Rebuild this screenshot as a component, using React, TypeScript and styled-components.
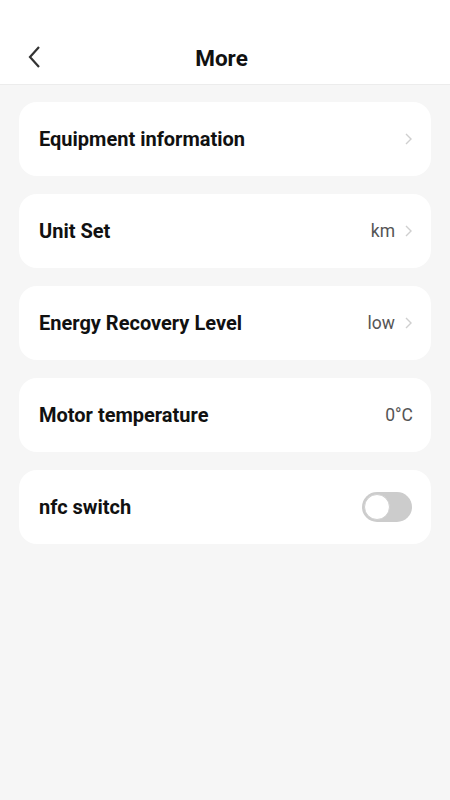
import styled, { createGlobalStyle } from "styled-components";

const GlobalStyle = createGlobalStyle`
  html, body {
    margin: 0;
    padding: 0;
    background: #f6f6f6;
    font-family: Roboto, "Noto Sans", sans-serif;
  }
`;

const Page = styled.div`
  width: 450px;
  min-height: 800px;
  background: #f6f6f6;
`;

const Header = styled.header`
  height: 85px;
  background: #ffffff;
  border-bottom: 1px solid #ececec;
  display: flex;
  align-items: center;
  justify-content: center;
  position: relative;
  box-sizing: border-box;
  padding: 32px 7px 0 0;
`;

const BackButton = styled.button`
  position: absolute;
  left: 22px;
  top: 44px;
  width: 26px;
  height: 26px;
  padding: 0;
  border: none;
  background: none;
  display: flex;
  align-items: center;
  justify-content: center;
`;

const Title = styled.h1`
  margin: 0;
  font-size: 22.5px;
  font-weight: 700;
  color: #111;
`;

const List = styled.div`
  display: flex;
  flex-direction: column;
  gap: 18px;
  padding: 17px 19px;
`;

const Card = styled.div`
  height: 74px;
  background: #ffffff;
  border-radius: 18px;
  display: flex;
  align-items: center;
  justify-content: space-between;
  padding: 0 18px 0 20px;
  box-sizing: border-box;
`;

const Label = styled.span`
  font-size: 20px;
  font-weight: 700;
  color: #111;
`;

const Right = styled.div`
  display: flex;
  align-items: center;
  gap: 8px;
`;

const Value = styled.span`
  font-size: 17.5px;
  color: #555;
`;

const Toggle = styled.div<{ $on: boolean }>`
  width: 50px;
  height: 30px;
  border-radius: 15px;
  background: ${(p) => (p.$on ? "#2e7cf6" : "#cccccc")};
  position: relative;
  margin-right: 1px;

  &::after {
    content: "";
    position: absolute;
    top: 2px;
    left: ${(p) => (p.$on ? "22px" : "2px")};
    width: 26px;
    height: 26px;
    border-radius: 50%;
    background: #fff;
    box-sizing: border-box;
    border: 1.5px solid #d0d0d0;
  }
`;

const Chevron = () => (
  <svg width="10" height="14" viewBox="0 0 10 14">
    <path d="M3 2l5 5-5 5" fill="none" stroke="#cfcfcf" strokeWidth="1.4" />
  </svg>
);

type Row = {
  label: string;
  value?: string;
  arrow?: boolean;
  toggle?: boolean;
};

const rows: Row[] = [
  { label: "Equipment information", arrow: true },
  { label: "Unit Set", value: "km", arrow: true },
  { label: "Energy Recovery Level", value: "low", arrow: true },
  { label: "Motor temperature", value: "0°C" },
  { label: "nfc switch", toggle: true },
];

export default function App() {
  return (
    <>
      <GlobalStyle />
      <Page>
        <Header>
          <BackButton aria-label="Back">
            <svg width="16" height="24" viewBox="0 0 16 24">
              <path d="M12 2L3 12l9 10" fill="none" stroke="#333" strokeWidth="2.2" />
            </svg>
          </BackButton>
          <Title>More</Title>
        </Header>
        <List>
          {rows.map((r) => (
            <Card key={r.label}>
              <Label>{r.label}</Label>
              <Right>
                {r.value && <Value>{r.value}</Value>}
                {r.arrow && <Chevron />}
                {r.toggle && <Toggle $on={false} />}
              </Right>
            </Card>
          ))}
        </List>
      </Page>
    </>
  );
}
